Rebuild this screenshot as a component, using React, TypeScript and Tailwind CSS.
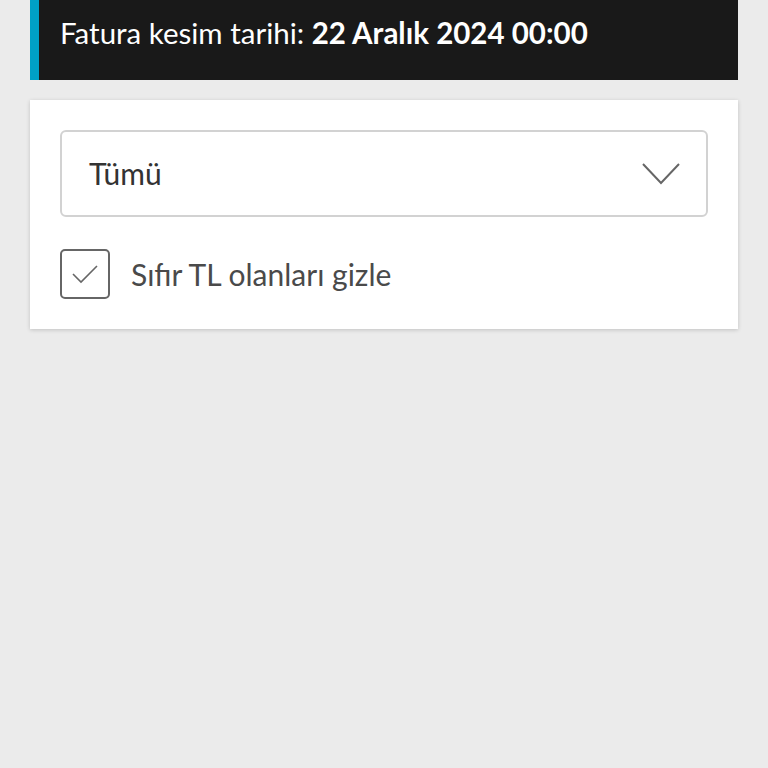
import React, { useState } from 'react';

export default function App() {
    const [hideZero, setHideZero] = useState(true);

    return (
        <div className="min-h-[768px] bg-[#ebebeb] px-[30px]" style={{ fontFamily: 'Lato, "Open Sans", sans-serif' }}>
            {/* Fatura bilgisi */}
            <div className="h-[80px] bg-[#191919] border-l-[9px] border-[#00a0c6] flex items-center pl-[21px] pb-[14px]">
                <p className="text-[29.5px] text-white">
                    Fatura kesim tarihi: <span className="font-bold">22 Aralık 2024 00:00</span>
                </p>
            </div>

            {/* Filtre kartı */}
            <div className="mt-[20px] bg-white px-[30px] pt-[30px] pb-[30px] shadow-[0_1px_4px_rgba(0,0,0,0.18)]">
                <button className="w-full h-[87px] flex items-center justify-between pl-[27px] pr-[26px] border-2 border-[#d2d2d2] rounded-[6px] bg-white">
                    <span className="text-[30px] text-[#333]">Tümü</span>
                    <svg width="38" height="22" viewBox="0 0 38 22" fill="none">
                        <path d="M1 1 L19 20 L37 1" stroke="#666" strokeWidth="2" />
                    </svg>
                </button>

                <label className="mt-[32px] flex items-center gap-[21px] cursor-pointer">
                    <span
                        onClick={() => setHideZero(!hideZero)}
                        className="w-[50px] h-[50px] flex items-center justify-center border-2 border-[#666] rounded-[5px]"
                    >
                        {hideZero && (
                            <svg width="26" height="20" viewBox="0 0 26 20" fill="none">
                                <path d="M1 10 L9 18 L25 2" stroke="#666" strokeWidth="1.6" />
                            </svg>
                        )}
                    </span>
                    <span className="text-[30px] text-[#4a4a4a]">Sıfır TL olanları gizle</span>
                </label>
            </div>
        </div>
    );
}
